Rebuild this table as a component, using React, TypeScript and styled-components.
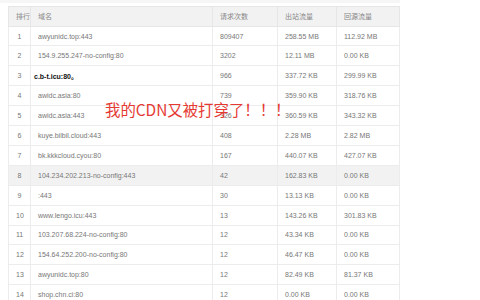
import React from "react";
import styled, { createGlobalStyle } from "styled-components";

const GlobalStyle = createGlobalStyle`
  html, body {
    margin: 0;
    padding: 0;
    background: #ffffff;
  }
  body {
    font-family: "Liberation Sans", "Noto Sans CJK SC", sans-serif;
  }
`;

const Page = styled.div`
  position: relative;
  width: 480px;
  height: 300px;
  overflow: hidden;
  background: #fff;
`;

const TopStrip = styled.div`
  height: 3px;
  width: 400px;
  background: #f6f6f6;
`;

const TableWrap = styled.div`
  padding: 3px 0 0 8px;
`;

const Table = styled.table`
  border-collapse: collapse;
  table-layout: fixed;
  width: 391px;
  font-size: 7px;
  color: #777;
`;

const HeadCell = styled.th<{ $center?: boolean }>`
  height: 19.6px;
  box-sizing: border-box;
  padding: 0 7px;
  background: #f2f2f2;
  border: 1px solid #e6e6e6;
  font-weight: normal;
  color: #888;
  text-align: ${(p) => (p.$center ? "center" : "left")};
  white-space: nowrap;
`;

const Row = styled.tr<{ $active?: boolean }>`
  background: ${(p) => (p.$active ? "#f2f2f2" : "#fff")};
`;

const Cell = styled.td<{ $center?: boolean; $strong?: boolean }>`
  height: 18.9px;
  padding: 0 ${(p) => (p.$strong ? "3px" : "7px")};
  border: 1px solid #ececec;
  text-align: ${(p) => (p.$center ? "center" : "left")};
  white-space: nowrap;
  overflow: hidden;
  color: ${(p) => (p.$strong ? "#111" : "#777")};
  font-weight: ${(p) => (p.$strong ? "bold" : "normal")};
`;

const Shout = styled.div`
  position: absolute;
  left: 105px;
  top: 99px;
  font-family: "Noto Sans CJK SC", sans-serif;
  font-size: 15.4px;
  line-height: 20px;
  color: #e53a33;
  white-space: nowrap;
`;

type Item = [string, string, string, string, boolean?];

const rows: Item[] = [
  ["awyunidc.top:443", "809407", "258.55 MB", "112.92 MB"],
  ["154.9.255.247-no-config:80", "3202", "12.11 MB", "0.00 KB"],
  ["c.b-t.icu:80。", "966", "337.72 KB", "299.99 KB", true],
  ["awidc.asia:80", "739", "359.90 KB", "318.76 KB"],
  ["awidc.asia:443", "326", "360.59 KB", "343.32 KB"],
  ["kuye.bilbil.cloud:443", "408", "2.28 MB", "2.82 MB"],
  ["bk.kkkcloud.cyou:80", "167", "440.07 KB", "427.07 KB"],
  ["104.234.202.213-no-config:443", "42", "162.83 KB", "0.00 KB"],
  [":443", "30", "13.13 KB", "0.00 KB"],
  ["www.lengo.icu:443", "13", "143.26 KB", "301.83 KB"],
  ["103.207.68.224-no-config:80", "12", "43.34 KB", "0.00 KB"],
  ["154.64.252.200-no-config:80", "12", "46.47 KB", "0.00 KB"],
  ["awyunidc.top:80", "12", "82.49 KB", "81.37 KB"],
  ["shop.chn.ci:80", "12", "0.00 KB", "0.00 KB"],
];

const App: React.FC = () => {
  return (
    <Page>
      <GlobalStyle />
      <TopStrip />
      <TableWrap>
        <Table>
          <colgroup>
            <col style={{ width: 22 }} />
            <col style={{ width: 182 }} />
            <col style={{ width: 65 }} />
            <col style={{ width: 59 }} />
            <col style={{ width: 63 }} />
          </colgroup>
          <thead>
            <tr>
              <HeadCell $center>排行</HeadCell>
              <HeadCell>域名</HeadCell>
              <HeadCell>请求次数</HeadCell>
              <HeadCell>出站流量</HeadCell>
              <HeadCell>回源流量</HeadCell>
            </tr>
          </thead>
          <tbody>
            {rows.map(([domain, hits, out, back, strong], i) => (
              <Row key={i} $active={i === 7}>
                <Cell $center>{i + 1}</Cell>
                <Cell $strong={strong}>{domain}</Cell>
                <Cell>{hits}</Cell>
                <Cell>{out}</Cell>
                <Cell>{back}</Cell>
              </Row>
            ))}
          </tbody>
        </Table>
      </TableWrap>
      <Shout>我的CDN又被打穿了！！！</Shout>
    </Page>
  );
};

export default App;
